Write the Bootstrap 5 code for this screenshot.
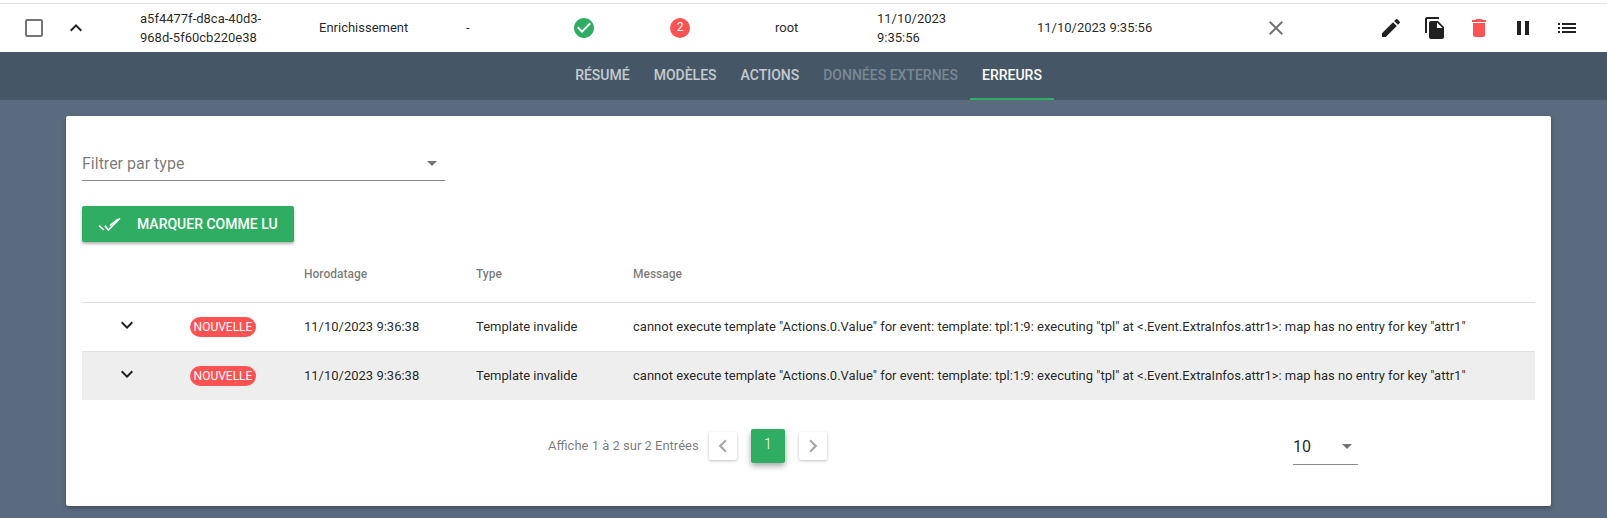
<!DOCTYPE html>
<html lang="fr">
<head>
  <meta charset="UTF-8">
  <title>Erreurs</title>
  <link href="https://cdn.jsdelivr.net/npm/bootstrap@5.3.0/dist/css/bootstrap.min.css" rel="stylesheet">
  <style>
    html, body { height: 100%; }
    body {
      font-family: Roboto, "Liberation Sans", sans-serif;
      font-size: 13px;
      color: rgba(0,0,0,.87);
      background: #5a6b80;
      overflow: hidden;
    }
    .ligne-top {
      height: 49px;
      background: #fff;
      border-top: 1px solid #e0e0e0;
      margin-top: 3px;
      box-shadow: 0 -3px 0 #fff;
      line-height: 19.5px;
    }
    .c-check { width: 64px; padding-left: 22px; }
    .c-chev { width: 76px; padding-left: 0; }
    .c-id { width: 179px; }
    .c-cat { width: 147px; }
    .c-dash { width: 106px; }
    .c-ok { width: 98px; }
    .c-err { width: 105px; }
    .c-user { width: 102px; }
    .c-date1 { width: 160px; padding-right: 60px; }
    .c-date2 { width: 227px; }
    .c-close { width: 115px; }
    .ico { display: block; fill: currentColor; }
    .rond-err {
      width: 20px; height: 20px; border-radius: 50%;
      background: #ff5252; color: #fff; font-size: 12px;
    }
    .actions-top { gap: 20px; }
    .barre-tabs {
      height: 48px;
      background: #455767;
      padding-left: 10px;
    }
    .onglet {
      height: 48px;
      padding: 0 12px 1px;
      font-size: 14px;
      font-weight: 500;
      color: rgba(255,255,255,.7);
      text-transform: uppercase;
      display: flex;
      align-items: center;
      text-decoration: none;
    }
    .onglet.off { color: rgba(255,255,255,.3); }
    .onglet.on { color: #fff; border-bottom: 2px solid #2fae63; padding-bottom: 0; padding-top: 1px; }
    .carte {
      margin: 16px 56px 0 66px;
      height: 390px;
      background: #fff;
      border-radius: 2px;
      box-shadow: 0 2px 4px rgba(0,0,0,.3);
      padding: 0 16px;
    }
    .filtre {
      width: 363px;
      height: 65px;
      margin-bottom: 25px;
      border-bottom: 1px solid #8a8a8a;
      font-size: 16px;
      color: rgba(0,0,0,.54);
      padding-top: 36px;
    }
    .fleche { width: 0; height: 0; border-left: 5px solid transparent; border-right: 5px solid transparent; border-top: 5px solid #757575; }
    .filtre .fleche { margin-top: 9px; margin-right: 8px; }
    .btn-lu {
      width: 212px; height: 36px;
      background: #2fae63;
      border-radius: 2px;
      color: #fff;
      font-size: 14px;
      font-weight: 500;
      text-transform: uppercase;
      box-shadow: 0 2px 3px rgba(0,0,0,.3);
      border: 0;
      padding: 0 0 0 16px;
      gap: 13px;
    }
    .btn-lu:hover { background: #2fae63; color: #fff; }
    .ico-lu { fill: none; stroke: #fff; stroke-width: 1.6; }
    .tab-err { margin: 0; table-layout: fixed; width: 100%; --bs-table-bg: transparent; }
    .tab-err th {
      height: 60px;
      font-size: 12px;
      font-weight: 500;
      color: rgba(0,0,0,.54);
      padding: 4px 0 0 0;
      border-bottom: 1px solid #e0e0e0;
      vertical-align: middle;
    }
    .tab-err td {
      height: 49px;
      padding: 0;
      font-size: 13px;
      color: rgba(0,0,0,.87);
      border-bottom: 1px solid #e0e0e0;
      vertical-align: middle;
      white-space: nowrap;
    }
    .tab-err tr:last-child td { height: 49px; background: #eeeeee; border-bottom: 0; }
    .chevron-cell { padding-left: 33px !important; padding-bottom: 4px !important; }
    .pastille {
      display: inline-block;
      width: 66px; height: 20px;
      line-height: 20px;
      border-radius: 10px;
      background: #ff5252;
      color: #fff;
      font-size: 12px;
      text-align: center;
      text-transform: uppercase;
      vertical-align: middle;
    }
    .pied { height: 75px; padding-top: 16px; }
    .pied-info { width: 151px; font-size: 13px; color: rgba(0,0,0,.54); white-space: nowrap; margin-left: 466px; margin-right: 10px; padding-top: 1px; }
    .page-b {
      width: 28px; height: 28px;
      background: #fff; border-radius: 2px;
      box-shadow: 0 1px 3px rgba(0,0,0,.25);
      color: #a8a8a8;
    }
    .page-b.cur {
      width: 34px; height: 34px;
      background: #2fae63; color: #fff;
      font-size: 14px;
      font-weight: 300;
      padding-bottom: 2px;
      margin: 0 14px;
      box-shadow: 0 3px 6px rgba(0,0,0,.35);
    }
    .par-page {
      width: 65px; height: 36px;
      margin-left: 466px;
      margin-top: 3px;
      border-bottom: 1px solid #8a8a8a;
      font-size: 16px;
      padding-right: 6px;
    }
  </style>
</head>
<body>
  <div class="ligne-top d-flex align-items-center">
    <div class="c-check"><svg class="ico" style="color:#757575" width="24" height="24" viewBox="0 0 24 24"><path d="M19 5v14H5V5h14m0-2H5c-1.100 0-2 .9-2 2v14c0 1.100.9 2 2 2h14c1.100 0 2-.9 2-2V5c0-1.100-.9-2-2-2z"/></svg></div>
    <div class="c-chev"><svg class="ico" width="24" height="24" viewBox="0 0 24 24"><path d="M12 8l-6 6 1.41 1.41L12 10.83l4.59 4.58L18 14z"/></svg></div>
    <div class="c-id">a5f4477f-d8ca-40d3-<br>968d-5f60cb220e38</div>
    <div class="c-cat">Enrichissement</div>
    <div class="c-dash">-</div>
    <div class="c-ok"><svg class="ico" style="color:#2fae63" width="24" height="24" viewBox="0 0 24 24"><path d="M12 2C6.48 2 2 6.48 2 12s4.48 10 10 10 10-4.48 10-10S17.52 2 12 2zm-2 15l-5-5 1.41-1.41L10 14.17l7.59-7.59L19 8l-9 9z"/></svg></div>
    <div class="c-err"><div class="rond-err d-flex align-items-center justify-content-center">2</div></div>
    <div class="c-user">root</div>
    <div class="c-date1">11/10/2023 9:35:56</div>
    <div class="c-date2">11/10/2023 9:35:56</div>
    <div class="c-close"><svg class="ico" style="color:#757575" width="24" height="24" viewBox="0 0 24 24"><path d="M19 6.41L17.59 5 12 10.59 6.41 5 5 6.41 10.59 12 5 17.59 6.41 19 12 13.41 17.59 19 19 17.59 13.41 12z"/></svg></div>
    <div class="actions-top d-flex">
      <svg class="ico" width="24" height="24" viewBox="0 0 24 24"><path d="M3 17.25V21h3.75L17.81 9.94l-3.75-3.75L3 17.25zM20.71 7.04c.39-.39.39-1.02 0-1.41l-2.34-2.34c-.39-.39-1.02-.39-1.41 0l-1.83 1.83 3.75 3.75 1.83-1.83z"/></svg>
      <svg class="ico" width="24" height="24" viewBox="0 0 24 24"><path d="M16 1H4c-1.1 0-2 .9-2 2v14h2V3h12V1zm-1 4l6 6v10c0 1.1-.9 2-2 2H7.99C6.89 23 6 22.1 6 21l.01-14c0-1.1.89-2 1.99-2h7zm-1 7h5.5L14 6.5V12z"/></svg>
      <svg class="ico" style="color:#ff5252" width="24" height="24" viewBox="0 0 24 24"><path d="M6 19c0 1.1.9 2 2 2h8c1.1 0 2-.9 2-2V7H6v12zM19 4h-3.5l-1-1h-5l-1 1H5v2h14V4z"/></svg>
      <svg class="ico" width="24" height="24" viewBox="0 0 24 24"><path d="M6 19h4V5H6v14zm8-14v14h4V5h-4z"/></svg>
      <svg class="ico" width="24" height="24" viewBox="0 0 24 24"><path d="M3 13h2v-2H3v2zm0 4h2v-2H3v2zm0-8h2V7H3v2zm4 4h14v-2H7v2zm0 4h14v-2H7v2zM7 7v2h14V7H7z"/></svg>
    </div>
  </div>

  <nav class="barre-tabs d-flex justify-content-center">
    <a class="onglet" href="#">Résumé</a>
    <a class="onglet" href="#">Modèles</a>
    <a class="onglet" href="#">Actions</a>
    <a class="onglet off" href="#">Données externes</a>
    <a class="onglet on" href="#">Erreurs</a>
  </nav>

  <div class="carte">
    <div class="filtre d-flex justify-content-between align-items-start">
      <span>Filtrer par type</span>
      <span class="fleche"></span>
    </div>
    <button class="btn btn-lu d-flex align-items-center" type="button">
      <svg class="ico-lu" width="26" height="16" viewBox="0 0 26 16"><path d="M1 9.700L6 14M7 9.700L10.300 14 22 2.300M12 9.700L20 3"/></svg>
      <span>Marquer comme lu</span>
    </button>
    <table class="table tab-err">
      <colgroup>
        <col style="width:108px"><col style="width:114px"><col style="width:172px"><col style="width:157px"><col>
      </colgroup>
      <thead>
        <tr><th></th><th></th><th>Horodatage</th><th>Type</th><th>Message</th></tr>
      </thead>
      <tbody>
        <tr>
          <td class="chevron-cell"><svg class="ico" width="24" height="24" viewBox="0 0 24 24"><path d="M16.59 8.59L12 13.17 7.41 8.59 6 10l6 6 6-6z"/></svg></td>
          <td><span class="pastille">Nouvelle</span></td>
          <td>11/10/2023 9:36:38</td>
          <td>Template invalide</td>
          <td>cannot execute template "Actions.0.Value" for event: template: tpl:1:9: executing "tpl" at &lt;.Event.ExtraInfos.attr1&gt;: map has no entry for key "attr1"</td>
        </tr>
        <tr>
          <td class="chevron-cell"><svg class="ico" width="24" height="24" viewBox="0 0 24 24"><path d="M16.59 8.59L12 13.17 7.41 8.59 6 10l6 6 6-6z"/></svg></td>
          <td><span class="pastille">Nouvelle</span></td>
          <td>11/10/2023 9:36:38</td>
          <td>Template invalide</td>
          <td>cannot execute template "Actions.0.Value" for event: template: tpl:1:9: executing "tpl" at &lt;.Event.ExtraInfos.attr1&gt;: map has no entry for key "attr1"</td>
        </tr>
      </tbody>
    </table>
    <div class="pied d-flex align-items-center">
      <div class="pied-info">Affiche 1 à 2 sur 2 Entrées</div>
      <div class="page-b d-flex align-items-center justify-content-center"><svg class="ico" width="26" height="26" viewBox="0 0 24 24"><path d="M15.41 7.41L14 6l-6 6 6 6 1.41-1.41L10.83 12z"/></svg></div>
      <div class="page-b cur d-flex align-items-center justify-content-center">1</div>
      <div class="page-b d-flex align-items-center justify-content-center"><svg class="ico" width="26" height="26" viewBox="0 0 24 24"><path d="M10 6L8.59 7.41 13.17 12l-4.58 4.59L10 18l6-6z"/></svg></div>
      <div class="par-page d-flex align-items-center justify-content-between">
        <span>10</span><span class="fleche"></span>
      </div>
    </div>
  </div>
  <script src="https://cdn.jsdelivr.net/npm/bootstrap@5.3.0/dist/js/bootstrap.bundle.min.js"></script>
</body>
</html>
